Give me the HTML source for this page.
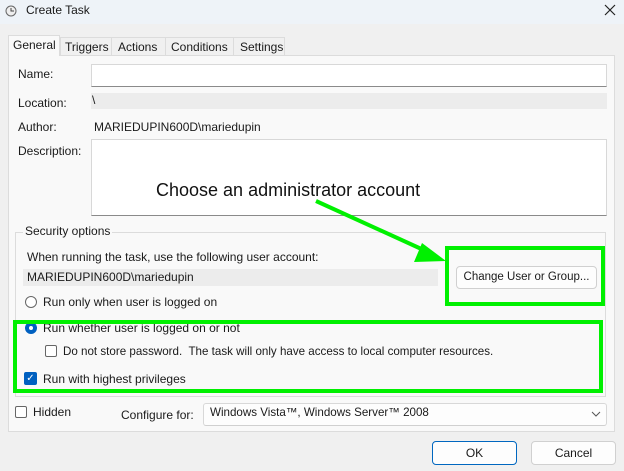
<!DOCTYPE html>
<html><head><style>
body{margin:0;width:624px;height:471px;background:#f0f0f0;font-family:"Segoe UI","Liberation Sans",sans-serif;font-size:12px;color:#1a1a1a;position:relative;overflow:hidden}
.a{position:absolute}
.t{position:absolute;white-space:nowrap}
.box{position:absolute;background:#fff;border:1px solid #d8d8d8;border-bottom-color:#8a8a8a;box-sizing:border-box}
.btn{position:absolute;background:#fdfdfd;border:1px solid #d0d0d0;border-radius:4px;box-sizing:border-box;text-align:center}
.g{position:absolute;border:4px solid #00f000;box-sizing:border-box}
</style></head><body>
<div class="a" style="left:0;top:0;width:624px;height:24px;background:#eef3f8"></div>
<svg class="a" style="left:5px;top:5px" width="12" height="12"><circle cx="6" cy="6" r="5" fill="#eee" stroke="#666"/><path d="M6 3v3h3" stroke="#444" fill="none"/></svg>
<div class="t" style="left:26px;top:3px">Create Task</div>
<svg class="a" style="left:604px;top:4px" width="12" height="12"><path d="M1 1L11 11M11 1L1 11" stroke="#222" stroke-width="1.2"/></svg>
<div class="a" style="left:0;top:24px;width:624px;height:447px;background:#f0f0f0"></div>
<div class="a" style="left:8px;top:55px;width:607px;height:377px;background:#f9f9f9;border:1px solid #dcdcdc;box-sizing:border-box"></div>
<div class="a" style="left:8px;top:35px;width:52px;height:21px;background:#f9f9f9;border:1px solid #dcdcdc;border-bottom:none;box-sizing:border-box"></div>
<div class="t" style="left:13px;top:38px">General</div>
<div class="a" style="left:60px;top:37px;width:225px;height:19px;border:1px solid #dcdcdc;box-sizing:border-box;background:#f0f0f0"></div>
<div class="a" style="left:111px;top:37px;width:1px;height:19px;background:#dcdcdc"></div>
<div class="a" style="left:165px;top:37px;width:1px;height:19px;background:#dcdcdc"></div>
<div class="a" style="left:233px;top:37px;width:1px;height:19px;background:#dcdcdc"></div>
<div class="t" style="left:65px;top:40px">Triggers</div>
<div class="t" style="left:118px;top:40px">Actions</div>
<div class="t" style="left:171px;top:40px">Conditions</div>
<div class="t" style="left:240px;top:40px">Settings</div>
<div class="t" style="left:18px;top:67px">Name:</div>
<div class="box" style="left:91px;top:64px;width:516px;height:23px"></div>
<div class="t" style="left:18px;top:96px">Location:</div>
<div class="a" style="left:91px;top:93px;width:516px;height:16px;background:#ececec"></div>
<div class="t" style="left:92px;top:93px">\</div>
<div class="t" style="left:18px;top:120px">Author:</div>
<div class="t" style="left:94px;top:120px">MARIEDUPIN600D\mariedupin</div>
<div class="t" style="left:18px;top:144px">Description:</div>
<div class="box" style="left:91px;top:139px;width:516px;height:77px"></div>
<div class="t" style="left:156px;top:180px;font-family:'Liberation Sans',sans-serif;font-size:18px;color:#111">Choose an administrator account</div>
<div class="a" style="left:15px;top:232px;width:591px;height:165px;border:1px solid #dcdcdc;box-sizing:border-box"></div>
<div class="t" style="left:23px;top:224px;background:#f9f9f9;padding:0 2px">Security options</div>
<div class="t" style="left:27px;top:250px">When running the task, use the following user account:</div>
<div class="a" style="left:23px;top:269px;width:415px;height:17px;background:#ececec"></div>
<div class="t" style="left:27px;top:270px">MARIEDUPIN600D\mariedupin</div>
<div class="btn" style="left:456px;top:266px;width:141px;height:23px;line-height:21px;font-size:11.5px">Change User or Group...</div>
<div class="a" style="left:25px;top:296px;width:10px;height:10px;border:1px solid #666;border-radius:50%;background:#fff"></div>
<div class="t" style="left:43px;top:295px">Run only when user is logged on</div>
<div class="a" style="left:25px;top:322px;width:12px;height:12px;border-radius:50%;background:#0060c0"></div>
<div class="a" style="left:29px;top:326px;width:4px;height:4px;border-radius:50%;background:#fff"></div>
<div class="t" style="left:43px;top:321px">Run whether user is logged on or not</div>
<div class="a" style="left:45px;top:345px;width:10px;height:10px;border:1px solid #666;border-radius:2px;background:#fff"></div>
<div class="t" style="left:63px;top:345px;font-size:11.6px">Do not store password.&nbsp; The task will only have access to local computer resources.</div>
<div class="a" style="left:24px;top:372px;width:13px;height:13px;border-radius:2px;background:#0060c0;color:#fff;font-size:10px;line-height:13px;text-align:center">✓</div>
<div class="t" style="left:43px;top:372px">Run with highest privileges</div>
<div class="g" style="left:445px;top:246px;width:160px;height:60px"></div>
<div class="g" style="left:13px;top:320px;width:590px;height:73px"></div>
<svg class="a" style="left:0;top:0" width="624" height="471"><line x1="316" y1="201" x2="428" y2="252" stroke="#00f000" stroke-width="4"/><polygon points="446,261 422,243 414,262" fill="#00f000"/></svg>
<div class="a" style="left:15px;top:406px;width:10px;height:10px;border:1px solid #666;border-radius:2px;background:#fff"></div>
<div class="t" style="left:33px;top:405px">Hidden</div>
<div class="t" style="left:121px;top:408px">Configure for:</div>
<div class="box" style="left:203px;top:403px;width:404px;height:23px;background:#fdfdfd;border-bottom-color:#d0d0d0;border-radius:3px"></div>
<div class="t" style="left:210px;top:406px;font-size:11.6px">Windows Vista™, Windows Server™ 2008</div>
<svg class="a" style="left:591px;top:411px" width="10" height="6"><path d="M1 1L5 5L9 1" stroke="#555" fill="none"/></svg>
<div class="btn" style="left:432px;top:441px;width:85px;height:24px;line-height:22px;border-color:#0067c0">OK</div>
<div class="btn" style="left:531px;top:441px;width:85px;height:24px;line-height:22px">Cancel</div>
</body></html>
